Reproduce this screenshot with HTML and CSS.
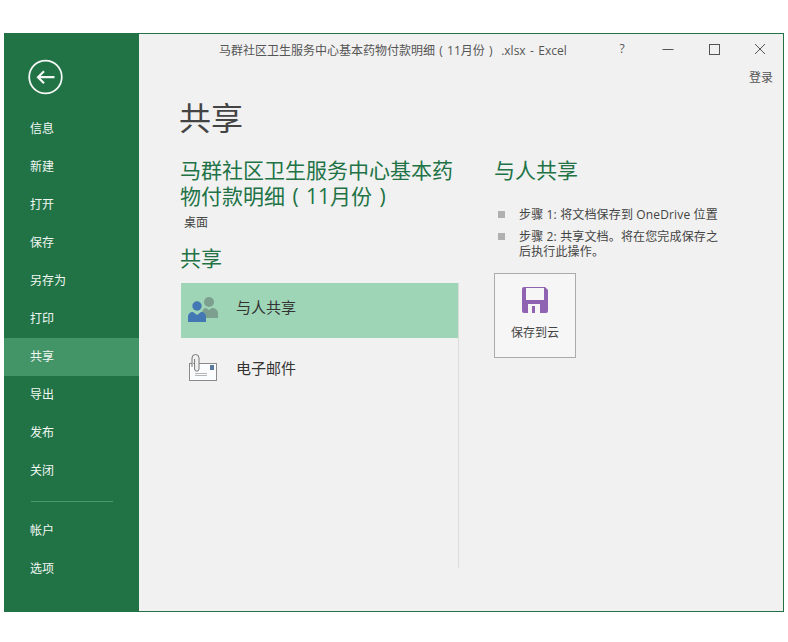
FILE: index.html
```html
<!DOCTYPE html>
<html lang="zh">
<head>
<meta charset="utf-8">
<title>共享</title>
<link rel="stylesheet" href="styles.css">
</head>
<body>
<div class="window">
  <nav class="sidebar">
    <div class="back">
      <svg width="36" height="36" viewBox="0 0 36 36" fill="none" stroke="#f4f8f5" stroke-width="1.8"><circle cx="18.5" cy="18" r="16.3"/><path d="M27.5 18.2H11M17 12.2l-6 6 6 6" stroke-width="2.2"/></svg>
    </div>
    <ul class="menu">
      <li class="item">信息</li>
      <li class="item">新建</li>
      <li class="item">打开</li>
      <li class="item">保存</li>
      <li class="item">另存为</li>
      <li class="item">打印</li>
      <li class="item active">共享</li>
      <li class="item">导出</li>
      <li class="item">发布</li>
      <li class="item">关闭</li>
    </ul>
    <div class="sep"></div>
    <ul class="menu">
      <li class="item">帐户</li>
      <li class="item">选项</li>
    </ul>
  </nav>
  <main class="main">
    <header class="titlebar">
      <div class="doc-title">马群社区卫生服务中心基本药物付款明细<span class="paren">(</span>11月份<span class="paren">)</span> .xlsx - Excel</div>
      <div class="controls">
        <span class="help">?</span>
        <svg width="12" height="12" viewBox="0 0 12 12" stroke="#555" fill="none"><path d="M0.5 6.5H11.5"/></svg>
        <svg width="12" height="12" viewBox="0 0 12 12" stroke="#555" fill="none"><rect x="1.5" y="1.5" width="10" height="10"/></svg>
        <svg width="12" height="12" viewBox="0 0 12 12" stroke="#555" fill="none"><path d="M1 1l10 10M11 1L1 11"/></svg>
      </div>
    </header>
    <div class="signin">登录</div>
    <h1 class="page-title">共享</h1>
    <div class="columns">
      <section class="left">
        <h2 class="doc-name">马群社区卫生服务中心基本药物付款明细<span class="paren">(</span>11月份<span class="paren">)</span></h2>
        <div class="location">桌面</div>
        <h3 class="section-title">共享</h3>
        <div class="options">
          <div class="option selected">
            <svg class="option-icon share-icon" width="32" height="32" viewBox="0 0 32 32">
              <circle cx="22" cy="8" r="5" fill="#7d9f8f"/>
              <path d="M15 24v-5c0-4 3-5 4-5l3 2 3-2c3 0 6 2 6 5v5z" fill="#7d9f8f"/>
              <circle cx="10" cy="12" r="4.7" fill="#4478b4"/>
              <path d="M1 28v-5c0-3 2-5 5-5l4 3 4-3c3 0 5 2 5 5v5z" fill="#4478b4"/>
            </svg>
            <span class="option-label">与人共享</span>
          </div>
          <div class="option">
            <svg class="option-icon mail-icon" width="32" height="32" viewBox="0 0 32 32" fill="none">
              <rect x="2.500" y="12.500" width="27" height="17" fill="#fbfcfd" stroke="#8a8a8a"/>
              <rect x="23" y="14" width="4" height="5" fill="#5b7a9d"/>
              <path d="M8 22.500h12M8 24.500h12" stroke="#b5b5b5"/>
              <path d="M5 16V7a3.500 3.500 0 0 1 7 0v11a2.200 2.200 0 0 1-4.400 0V8" stroke="#777" fill="#f1f1f1"/>
            </svg>
            <span class="option-label">电子邮件</span>
          </div>
        </div>
      </section>
      <section class="right">
        <h2 class="right-title">与人共享</h2>
        <ul class="steps">
          <li class="step">步骤 1: 将文档保存到 OneDrive 位置</li>
          <li class="step">步骤 2: 共享文档。将在您完成保存之后执行此操作。</li>
        </ul>
        <button class="save-btn" type="button">
          <svg width="26" height="26" viewBox="0 0 26 26"><path d="M2 0h21l3 3v21a2 2 0 0 1-2 2H2a2 2 0 0 1-2-2V2a2 2 0 0 1 2-2z" fill="#8f63b2"/><rect x="4" y="1" width="18" height="12" fill="#f6f6f6"/><rect x="6" y="17" width="12" height="9" fill="#f6f6f6"/><rect x="10" y="19" width="3" height="7" fill="#8f63b2"/></svg>
          <span>保存到云</span>
        </button>
      </section>
    </div>
  </main>
</div>
</body>
</html>
```
FILE: styles.css
```css
* { box-sizing: border-box; }
html, body { margin: 0; padding: 0; background: #fff; }
body {
  padding: 33px 4px 30px;
  font-family: "Open Sans", "Noto Sans CJK SC", sans-serif;
  color: #444;
}
h1, h2, h3, ul { margin: 0; padding: 0; font-weight: 400; }
ul { list-style: none; }

.window {
  display: flex;
  width: 780px;
  height: 579px;
  background: #f1f1f1;
  border: 1px solid #217346;
  border-left: 0;
}
.sidebar {
  width: 135px;
  flex: none;
  margin-top: -1px;
  margin-bottom: -1px;
  background: #217346;
  color: #fff;
  padding-top: 26px;
}
.back { height: 50px; padding-left: 23px; display: flex; }
.item {
  height: 38px;
  line-height: 38px;
  padding-left: 26px;
  font-size: 12px;
  color: #f2f7f4;
}
.active { background: #439467; }
.sep { height: 1px; width: 82px; margin: 11px 0 10px 27px; background: #4c9a6e; }
.back + .menu { margin-top: 1px; }

.main { flex: 1; min-width: 0; display: flex; flex-direction: column; }
.titlebar { position: relative; height: 35px; flex: none; }
.doc-title {
  padding-top: 8px;
  padding-left: 80px;
  font-size: 12px;
  line-height: 18px;
  color: #555;
  white-space: pre;
  word-spacing: 1.3px;
}
.paren { display: inline-block; width: 1em; text-align: center; }
.controls {
  position: absolute;
  top: 9px;
  right: 17px;
  display: flex;
  align-items: center;
  gap: 34px;
}
.help { font-size: 12px; width: 12px; text-align: center; line-height: 12px; color: #555; }
.signin { align-self: flex-end; padding-right: 10px; font-size: 12px; line-height: 18px; color: #555; }
.page-title { font-size: 32px; line-height: 44px; color: #444; padding-left: 40px; margin-top: 9px; }

.columns { display: flex; padding-left: 42px; margin-top: 17px; }
.left { width: 279px; flex: none; }
.doc-name { font-size: 21px; line-height: 26px; color: #217346; width: 280px; margin-left: -1px; }
.location { font-size: 12px; line-height: 18px; color: #444; padding-left: 3px; margin-top: 5px; }
.section-title { font-size: 21px; line-height: 28px; color: #217346; margin: 12px 0 0 -1px; }
.options { margin-top: 11px; width: 278px; height: 285px; border-right: 1px solid #dcdcdc; }
.option {
  display: flex;
  align-items: center;
  height: 55px;
  margin-bottom: 6px;
  padding-left: 6px;
  font-size: 15px;
  color: #333;
}
.option-label { margin-bottom: 9px; }
.option.selected { background: #9fd5b7; }
.option-icon { flex: none; margin-right: 17px; }
.share-icon { margin-bottom: 1px; }
.mail-icon { margin-bottom: 9px; }

.right { padding-left: 34px; width: 270px; flex: none; }
.right-title { font-size: 21px; line-height: 28px; color: #217346; margin-top: -1px; }
.steps { margin-top: 23px; }
.step {
  position: relative;
  padding-left: 25px;
  font-size: 12px;
  line-height: 15px;
  margin-bottom: 7px;
  color: #444;
  width: 230px;
  letter-spacing: 0.15px;
}
.step::before {
  content: "";
  position: absolute;
  left: 4px;
  top: 4px;
  width: 7px;
  height: 7px;
  background: #b0b0b0;
}
.save-btn {
  display: flex;
  flex-direction: column;
  align-items: center;
  width: 82px;
  height: 85px;
  margin-top: 14px;
  padding: 13px 0 0;
  background: #f6f6f6;
  border: 1px solid #ababab;
  font: inherit;
  font-size: 12px;
  color: #444;
  gap: 10px;
}
```
